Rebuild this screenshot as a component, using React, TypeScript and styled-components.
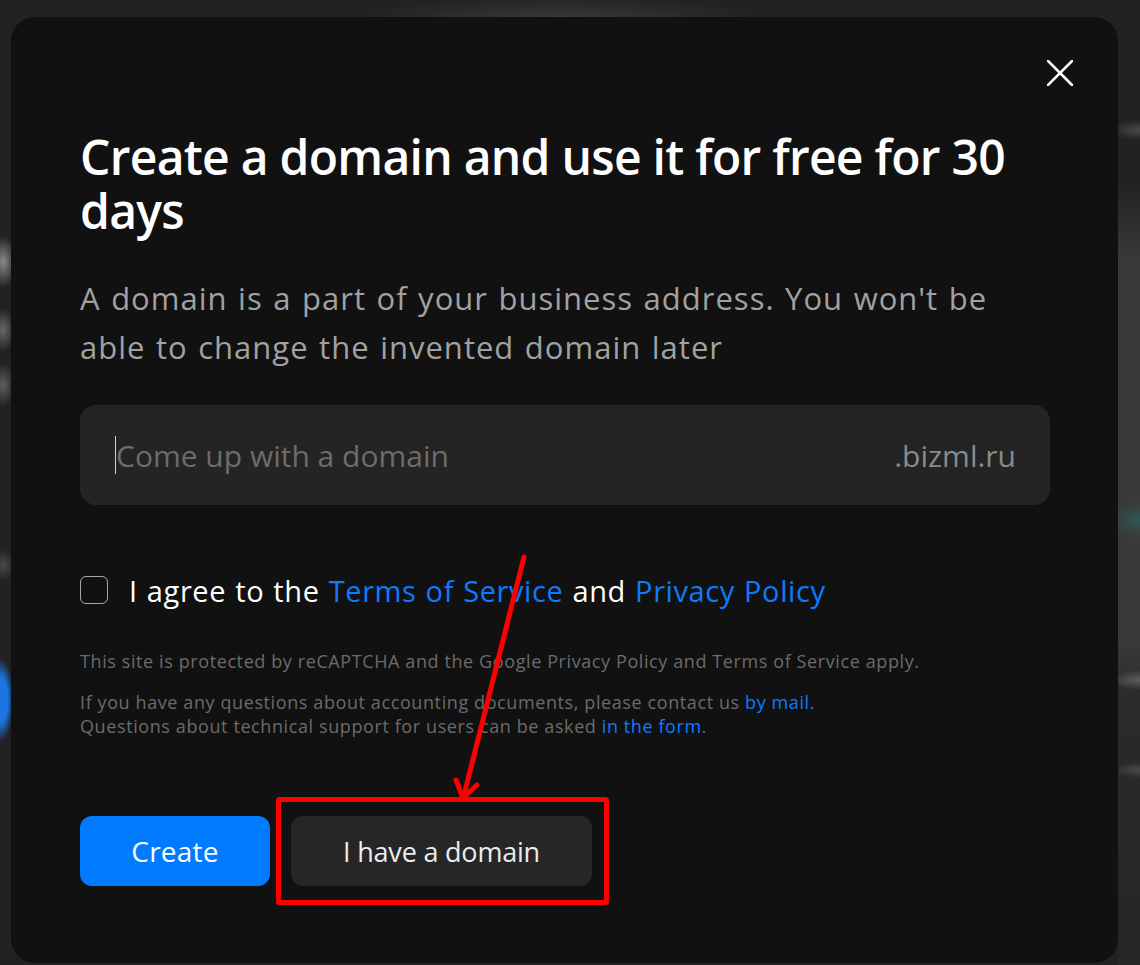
import React from "react";
import styled, { createGlobalStyle } from "styled-components";

const Global = createGlobalStyle`
  html, body { margin: 0; padding: 0; }
  body {
    width: 1140px;
    height: 965px;
    overflow: hidden;
    background-color: #222;
    background-image:
      radial-gradient(ellipse 14px 42px at 0px 700px, #1b74e0 0%, #1b74e0 55%, rgba(27,116,224,0) 100%),
      radial-gradient(ellipse 14px 26px at 3px 262px, #8a8a8a 0%, rgba(138,138,138,0) 100%),
      radial-gradient(ellipse 12px 22px at 3px 330px, #686868 0%, rgba(104,104,104,0) 100%),
      radial-gradient(ellipse 12px 22px at 3px 385px, #606060 0%, rgba(96,96,96,0) 100%),
      radial-gradient(ellipse 12px 16px at 3px 565px, #4a4a4a 0%, rgba(74,74,74,0) 100%),
      radial-gradient(ellipse 30px 18px at 1140px 520px, #2f5656 0%, rgba(47,86,86,0) 100%),
      radial-gradient(ellipse 30px 10px at 1140px 130px, #4a4a4a 0%, rgba(74,74,74,0) 100%),
      radial-gradient(ellipse 30px 10px at 1140px 680px, #5e5e5e 0%, rgba(94,94,94,0) 100%),
      radial-gradient(ellipse 30px 8px at 1140px 770px, #4a4a4a 0%, rgba(74,74,74,0) 100%),
      linear-gradient(to bottom, #222 0px, #222 180px, #3a3a3a 260px, #3a3a3a 640px, #2a2a2a 700px, #262626 965px),
      radial-gradient(ellipse 200px 20px at 560px 17px, #383838 0%, rgba(56,56,56,0) 100%);
    background-size: auto, auto, auto, auto, auto, auto, auto, auto, auto, 22px 965px, auto;
    background-position: 0 0, 0 0, 0 0, 0 0, 0 0, 0 0, 0 0, 0 0, 0 0, 1118px 0, 0 0;
    background-repeat: no-repeat;
    font-family: "Open Sans", "Liberation Sans", sans-serif;
  }
`;

const Page = styled.div`
  position: relative;
  padding: 17px 22px 0 11px;
`;

const Modal = styled.div`
  box-sizing: border-box;
  width: 1107px;
  height: 946px;
  background: #111111;
  border-radius: 24px;
  padding: 43px 45px 0 69px;
  display: flex;
  flex-direction: column;
`;

const CloseRow = styled.div`
  display: flex;
  justify-content: flex-end;
  height: 26px;
`;

const CloseButton = styled.button`
  width: 26px;
  height: 26px;
  padding: 0;
  border: none;
  background: transparent;
  cursor: pointer;
  display: flex;
  svg { display: block; }
`;

const Content = styled.div`
  width: 970px;
  display: flex;
  flex-direction: column;
`;

const Title = styled.h1`
  margin: 44px 0 0;
  font-size: 48px;
  line-height: 54px;
  font-weight: 600;
  color: #ffffff;
  letter-spacing: -0.72px;
`;

const Subtitle = styled.p`
  margin: 36px 0 0;
  font-size: 31px;
  line-height: 49px;
  font-weight: 400;
  color: #a1a1a1;
  letter-spacing: 1px;
  word-spacing: 1.5px;
`;

const InputBox = styled.label`
  margin-top: 33px;
  box-sizing: border-box;
  height: 100px;
  border-radius: 16px;
  background: #242424;
  display: flex;
  align-items: center;
  padding: 0 34px 0 35px;
  gap: 20px;
`;

const Caret = styled.span`
  width: 1px;
  height: 38px;
  background: #d0d0d0;
  margin-right: -20px;
`;

const DomainInput = styled.input`
  flex: 1;
  min-width: 0;
  border: none;
  outline: none;
  background: transparent;
  font-family: inherit;
  font-size: 30px;
  color: #fff;
  padding: 0;
  &::placeholder { color: #6c6c6c; }
`;

const Suffix = styled.span`
  font-size: 30px;
  color: #8a8a8a;
`;

const AgreeRow = styled.div`
  margin-top: 65px;
  display: flex;
  align-items: center;
  gap: 21px;
  height: 40px;
`;

const CheckBox = styled.span`
  box-sizing: border-box;
  width: 28px;
  height: 28px;
  border: 1.5px solid #a8a8a8;
  border-radius: 6px;
  flex-shrink: 0;
`;

const AgreeText = styled.span`
  font-size: 29px;
  letter-spacing: 0.6px;
  word-spacing: 1px;
  color: #ffffff;
  white-space: nowrap;
`;

const Link = styled.a`
  color: #0c7bff;
  text-decoration: none;
`;

const Note = styled.p<{ $gap: number }>`
  margin: ${(p) => p.$gap}px 0 0;
  font-size: 18px;
  letter-spacing: 0.6px;
  line-height: 24px;
  color: #6b6b6b;
  white-space: nowrap;
`;

const Actions = styled.div`
  margin-top: 78px;
  display: flex;
  gap: 21px;
`;

const Button = styled.button<{ $primary?: boolean }>`
  height: 70px;
  border: none;
  border-radius: 12px;
  font-family: inherit;
  font-size: ${(p) => (p.$primary ? 28 : 27)}px;
  cursor: pointer;
  padding: 0;
  white-space: nowrap;
  width: ${(p) => (p.$primary ? 190 : 301)}px;
  background: ${(p) => (p.$primary ? "#007bff" : "#262626")};
  color: ${(p) => (p.$primary ? "#ffffff" : "#ececec")};
  letter-spacing: ${(p) => (p.$primary ? 0.2 : -0.2)}px;
`;

const Annotation = styled.svg`
  position: absolute;
  left: 0;
  top: 0;
  pointer-events: none;
`;

export default function App() {
  return (
    <>
      <Global />
      <Page>
        <Modal>
          <CloseRow>
            <CloseButton aria-label="Close">
              <svg width="26" height="26" viewBox="0 0 26 26">
                <path d="M1 1 L25 25 M25 1 L1 25" stroke="#fff" strokeWidth="2.6" strokeLinecap="square" />
              </svg>
            </CloseButton>
          </CloseRow>
          <Content>
            <Title>Create a domain and use it for free for 30 days</Title>
            <Subtitle>
              A domain is a part of your business address. You won't be able to change the invented domain later
            </Subtitle>
            <InputBox>
              <Caret />
              <DomainInput placeholder="Come up with a domain" />
              <Suffix>.bizml.ru</Suffix>
            </InputBox>
            <AgreeRow>
              <CheckBox />
              <AgreeText>
                I agree to the <Link>Terms of Service</Link> and <Link>Privacy Policy</Link>
              </AgreeText>
            </AgreeRow>
            <Note $gap={39}>
              This site is protected by reCAPTCHA and the Google Privacy Policy and Terms of Service apply.
            </Note>
            <Note $gap={17}>
              If you have any questions about accounting documents, please contact us <Link>by mail.</Link>
              <br />
              Questions about technical support for users can be asked <Link>in the form.</Link>
            </Note>
            <Actions>
              <Button $primary>Create</Button>
              <Button>I have a domain</Button>
            </Actions>
          </Content>
        </Modal>
        <Annotation width="1140" height="965" viewBox="0 0 1140 965">
          <rect x="278.5" y="799.5" width="328" height="103" fill="none" stroke="#ff0000" strokeWidth="5" rx="1" />
          <path d="M524 557 L464 795" stroke="#ff0000" strokeWidth="5" strokeLinecap="round" fill="none" />
          <path d="M456 780 L463 798 L477 785" stroke="#ff0000" strokeWidth="5" strokeLinecap="round" strokeLinejoin="round" fill="none" />
        </Annotation>
      </Page>
    </>
  );
}
